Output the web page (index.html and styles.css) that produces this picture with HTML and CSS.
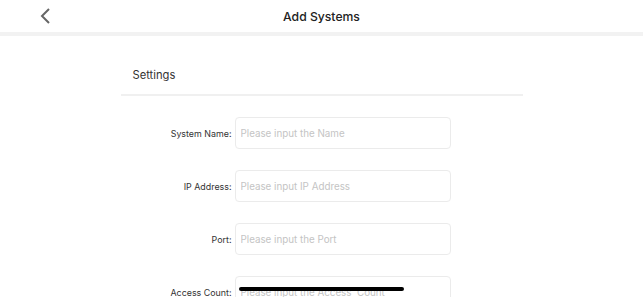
FILE: index.html
```html
<!DOCTYPE html>
<html lang="en">
<head>
    <meta charset="UTF-8">
    <meta name="viewport" content="width=device-width, initial-scale=1.0">
    <title>Add Systems</title>
    <link rel="stylesheet" href="styles.css">
</head>
<body>
<div class="nav-bar">
    <a href="#" class="back-btn">
        <svg width="12" height="16" viewBox="0 0 12 16">
            <path d="M10 1 L3 8 L10 15" fill="none" stroke="#666" stroke-width="2"/>
        </svg>
    </a>
    <h1>Add Systems</h1>
</div>
<div class="page">
    <div class="container">
        <h2 class="section-title">Settings</h2>
        <form id="systemForm" class="form">
            <div class="form-group">
                <label for="systemName">System Name:</label>
                <input type="text" id="systemName" placeholder="Please input the Name">
            </div>
            <div class="form-group">
                <label for="ipAddress">IP Address:</label>
                <input type="text" id="ipAddress" placeholder="Please input IP Address">
            </div>
            <div class="form-group">
                <label for="port">Port:</label>
                <input type="text" id="port" placeholder="Please input the Port">
            </div>
            <div class="form-group">
                <label for="accessCount">Access Count:</label>
                <input type="text" id="accessCount" placeholder="Please input the Access  Count">
            </div>
        </form>
    </div>
</div>
<div class="home-indicator"></div>
</body>
</html>
```

FILE: styles.css
```css
html {
    overflow: hidden;
}
body {
    font-family: Inter, "Liberation Sans", Arial, sans-serif;
    background-color: #fff;
    margin: 0;
    padding: 0;
    height: 297px;
    overflow: hidden;
}
.nav-bar {
    height: 32px;
    display: flex;
    align-items: center;
    justify-content: center;
    position: relative;
    border-bottom: 4px solid #f2f2f2;
}
.nav-bar h1 {
    margin: 0;
    font-size: 12.2px;
    font-weight: 500;
    color: #222;
}
.back-btn {
    position: absolute;
    left: 39px;
    top: 8px;
    display: block;
    line-height: 0;
}
.container {
    width: 402px;
    margin: 0 auto;
}
.section-title {
    margin: 0;
    padding: 32px 12px 12px;
    font-size: 11.2px;
    font-weight: normal;
    color: #333;
    border-bottom: 2px solid #f0f0f0;
}
.form {
    padding-top: 21px;
}
.form-group {
    display: flex;
    align-items: center;
    margin-bottom: 21px;
}
label {
    width: 111px;
    margin-right: 3px;
    text-align: right;
    font-size: 8.9px;
    color: #333;
}
input {
    width: 216px;
    height: 32px;
    box-sizing: border-box;
    padding: 0 5px;
    border: 1px solid #ebebeb;
    border-radius: 4px;
    font-family: Inter, "Liberation Sans", Arial, sans-serif;
    font-size: 9.8px;
    color: #333;
    outline: none;
}
input::placeholder {
    color: #c4c4c4;
}
.home-indicator {
    position: absolute;
    left: 239px;
    top: 287px;
    width: 165px;
    height: 4px;
    border-radius: 2px;
    background: #000;
}
```
